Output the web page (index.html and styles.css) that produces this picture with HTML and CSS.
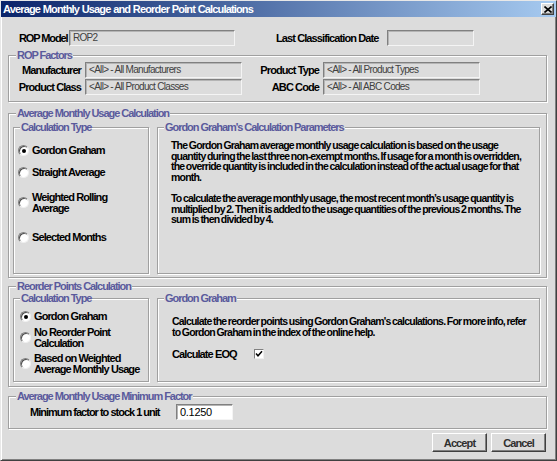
FILE: index.html
```html
<!DOCTYPE html>
<html>
<head>
<meta charset="utf-8">
<title>Average Monthly Usage and Reorder Point Calculations</title>
<link rel="stylesheet" href="styles.css">
</head>
<body>
<div class="window">
  <div class="titlebar">
    <span class="title">Average Monthly Usage and Reorder Point Calculations</span>
    <span class="close"><svg width="8" height="7" viewBox="0 0 8 7"><path d="M0.5 0.5 L7.5 6.5 M7.5 0.5 L0.5 6.5" stroke="#000" stroke-width="1.6" fill="none"/></svg></span>
  </div>
  <div class="content">
    <div class="toprow">
      <span class="lbl l-rop">ROP Model</span>
      <span class="field f-rop">ROP2</span>
      <span class="lbl l-lcd">Last Classification Date</span>
      <span class="field f-lcd"></span>
    </div>

    <fieldset class="grp factors">
      <legend>ROP Factors</legend>
      <div class="fgrid">
        <span class="lbl">Manufacturer</span><span class="field">&lt;All&gt; - All Manufacturers</span>
        <span class="lbl">Product Type</span><span class="field">&lt;All&gt; - All Product Types</span>
        <span class="lbl">Product Class</span><span class="field">&lt;All&gt; - All Product Classes</span>
        <span class="lbl">ABC Code</span><span class="field">&lt;All&gt; - All ABC Codes</span>
      </div>
    </fieldset>

    <fieldset class="grp amu">
      <legend>Average Monthly Usage Calculation</legend>
      <div class="pair">
        <fieldset class="grp ctype ctype-amu">
          <legend>Calculation Type</legend>
          <div class="opt o1"><span class="radio on"></span><span>Gordon Graham</span></div>
          <div class="opt o2"><span class="radio"></span><span>Straight Average</span></div>
          <div class="opt o3"><span class="radio"></span><span>Weighted Rolling<br>Average</span></div>
          <div class="opt o4"><span class="radio"></span><span>Selected Months</span></div>
        </fieldset>
        <fieldset class="grp desc desc-amu">
          <legend>Gordon Graham's Calculation Parameters</legend>
          <div class="desc-body">
            <p>The Gordon Graham average monthly usage calculation is based on the usage<br>quantity during the last three non-exempt months. If usage for a month is overridden,<br>the override quantity is included in the calculation instead of the actual usage for that<br>month.</p>
            <p class="p2">To calculate the average monthly usage, the most recent month&#8217;s usage quantity is<br>multiplied by 2. Then it is added to the usage quantities of the previous 2 months. The<br>sum is then divided by 4.</p>
          </div>
        </fieldset>
      </div>
    </fieldset>

    <fieldset class="grp reorder">
      <legend>Reorder Points Calculation</legend>
      <div class="pair">
        <fieldset class="grp ctype ctype-rop">
          <legend>Calculation Type</legend>
          <div class="opt r1"><span class="radio on"></span><span>Gordon Graham</span></div>
          <div class="opt r2"><span class="radio"></span><span>No Reorder Point<br>Calculation</span></div>
          <div class="opt r3"><span class="radio"></span><span>Based on Weighted<br>Average Monthly Usage</span></div>
        </fieldset>
        <fieldset class="grp desc desc-rop">
          <legend>Gordon Graham</legend>
          <div class="desc-body">
            <p>Calculate the reorder points using Gordon Graham's calculations. For more info, refer<br>to Gordon Graham in the index of the online help.</p>
            <div class="eoq"><span class="eoq-lbl">Calculate EOQ</span><span class="check"><svg width="8" height="8" viewBox="0 0 8 8"><path d="M1 3.5 L3 5.8 L7 1.2" stroke="#000" stroke-width="1.5" fill="none"/></svg></span></div>
          </div>
        </fieldset>
      </div>
    </fieldset>

    <fieldset class="grp minf">
      <legend>Average Monthly Usage Minimum Factor</legend>
      <div class="minrow">
        <span class="lbl l-min">Minimum factor to stock 1 unit</span>
        <span class="field f-min">0.1250</span>
      </div>
    </fieldset>

    <div class="buttons">
      <span class="btn">Accept</span>
      <span class="btn">Cancel</span>
    </div>
  </div>
</div>
</body>
</html>
```

FILE: styles.css
```css
* { box-sizing: border-box; }
html, body { margin: 0; padding: 0; }
body {
  width: 557px;
  height: 461px;
  overflow: hidden;
  background: #dcdcdc;
  font-family: "Liberation Sans", Arial, sans-serif;
  font-size: 11px;
  color: #000;
}
.window {
  width: 557px;
  height: 461px;
  display: flex;
  flex-direction: column;
  border: 1px solid;
  border-color: #e8e8e8 #404040 #404040 #e8e8e8;
  box-shadow: inset 1px 1px 0 #fff, inset -1px -1px 0 #808080;
  background: #dcdcdc;
}
.titlebar {
  flex: none;
  height: 16px;
  display: flex;
  align-items: center;
  justify-content: space-between;
  padding: 0 2px 0 2px;
  background: linear-gradient(to right, #0a246a, #a6caf0);
}
.title {
  color: #fff;
  font-weight: bold;
  font-size: 11px;
  letter-spacing: -0.85px;
  word-spacing: 0.5px;
}
.close {
  width: 13px;
  height: 12px;
  display: flex;
  align-items: center;
  justify-content: center;
  background: #dcdcdc;
  border: 1px solid;
  border-color: #fff #404040 #404040 #fff;
  box-shadow: inset -1px -1px 0 #808080;
}
.content {
  flex: 1;
  display: flex;
  flex-direction: column;
  padding: 0 9px 0 7px;
}
.lbl { font-weight: bold; white-space: nowrap; letter-spacing: -0.9px; }
.field {
  display: block;
  height: 16px;
  padding: 0 3px;
  line-height: 14px;
  font-size: 10px;
  letter-spacing: -0.7px;
  border: 1px solid;
  border-color: #808080 #f4f4f4 #f4f4f4 #808080;
  box-shadow: inset 1px 1px 0 #b4b4b4;
  color: #404040;
  white-space: nowrap;
  overflow: hidden;
}
.toprow {
  display: flex;
  align-items: center;
  height: 16px;
  margin-top: 13px;
}
.l-rop { margin-left: 11px; width: 50px; letter-spacing: -1.1px; }
.f-rop { width: 166px; }
.l-lcd { margin-left: 41px; width: 111px; }
.f-lcd { width: 87px; }

.grp {
  margin: 0;
  padding: 0;
  min-width: 0;
  border: 1px solid #a0a0a0;
  box-shadow: inset 1px 1px 0 #fff, 1px 1px 0 #fff;
}
.grp > legend {
  margin-left: 6px;
  padding: 0 1px;
  height: 11px;
  line-height: 11px;
  color: #5a5a9c;
  font-weight: bold;
  letter-spacing: -1.05px;
  background: #dcdcdc;
}
.factors > legend, .minf > legend { margin-left: 7px; }
.factors { margin-top: 4px; padding: 1px 0 6px 0; }
.fgrid {
  display: grid;
  grid-template-columns: 72px 157px 73px 157px;
  grid-auto-rows: 16px;
  column-gap: 4px;
  row-gap: 1px;
  align-items: center;
}
.fgrid .lbl { text-align: right; }

.pair { display: flex; gap: 8px; }
.amu { margin-top: 6px; padding: 3px 6px 3px 4px; }
.reorder { margin-top: 3px; padding: 1px 6px 4px 4px; }
.amu > legend, .reorder > legend { margin-left: 3px; }
.ctype { width: 136px; flex: none; }
.desc { flex: 1; }
.ctype-amu, .desc-amu { height: 152px; }
.ctype-rop, .desc-rop { height: 89px; }

.opt {
  display: flex;
  align-items: center;
  font-weight: bold;
  line-height: 10.6px;
  letter-spacing: -0.9px;
  white-space: nowrap;
}
.radio {
  flex: none;
  position: relative;
  width: 11px;
  height: 11px;
  margin: 0 3px 0 4px;
  border-radius: 50%;
  background: #fff;
  border: 1px solid;
  border-color: #808080 #f0f0f0 #f0f0f0 #808080;
  box-shadow: inset 1px 1px 0 #505050;
}
.radio.on::after {
  content: "";
  position: absolute;
  left: 3px;
  top: 3px;
  width: 4px;
  height: 4px;
  border-radius: 50%;
  background: #000;
}
.ctype-amu { padding-top: 12px; }
.o2 { margin-top: 11px; }
.o3 { margin-top: 14px; }
.o4 { margin-top: 19px; }
.ctype-rop { padding-top: 7px; }
.ctype-rop .radio { margin-left: 6px; }
.r2, .r3 { margin-top: 5px; }

.desc-body p {
  margin: 0;
  font-weight: bold;
  font-size: 10.5px;
  line-height: 10.6px;
  white-space: nowrap;
  letter-spacing: -0.8px;
  word-spacing: -0.6px;
}
.desc-amu .desc-body { padding: 7px 0 0 13px; }
.desc-amu .p2 { margin-top: 10.6px; }
.desc-rop .desc-body { padding: 12px 0 0 14px; }
.eoq {
  display: flex;
  align-items: center;
  margin-top: 11px;
  height: 11px;
  font-weight: bold;
  letter-spacing: -0.9px;
}
.eoq-lbl { width: 82px; }
.check {
  width: 10px;
  height: 10px;
  display: flex;
  align-items: center;
  justify-content: center;
  background: #fff;
  border: 1px solid;
  border-color: #808080 #f0f0f0 #f0f0f0 #808080;
}

.minf { margin-top: 4px; padding: 2px 0 8px 0; }
.minrow { display: flex; align-items: center; }
.l-min { margin-left: 21px; width: 146px; letter-spacing: -1px; }
.f-min { width: 57px; background: #fff; color: #000; font-size: 11px; letter-spacing: -0.3px; }

.buttons {
  display: flex;
  justify-content: flex-end;
  gap: 4px;
  margin-top: 4px;
  padding-right: 1px;
}
.btn {
  width: 55px;
  height: 19px;
  display: flex;
  align-items: center;
  justify-content: center;
  font-weight: bold;
  letter-spacing: -0.9px;
  color: #303030;
  border: 1px solid;
  border-color: #fff #404040 #404040 #fff;
  box-shadow: inset -1px -1px 0 #808080;
}
```
